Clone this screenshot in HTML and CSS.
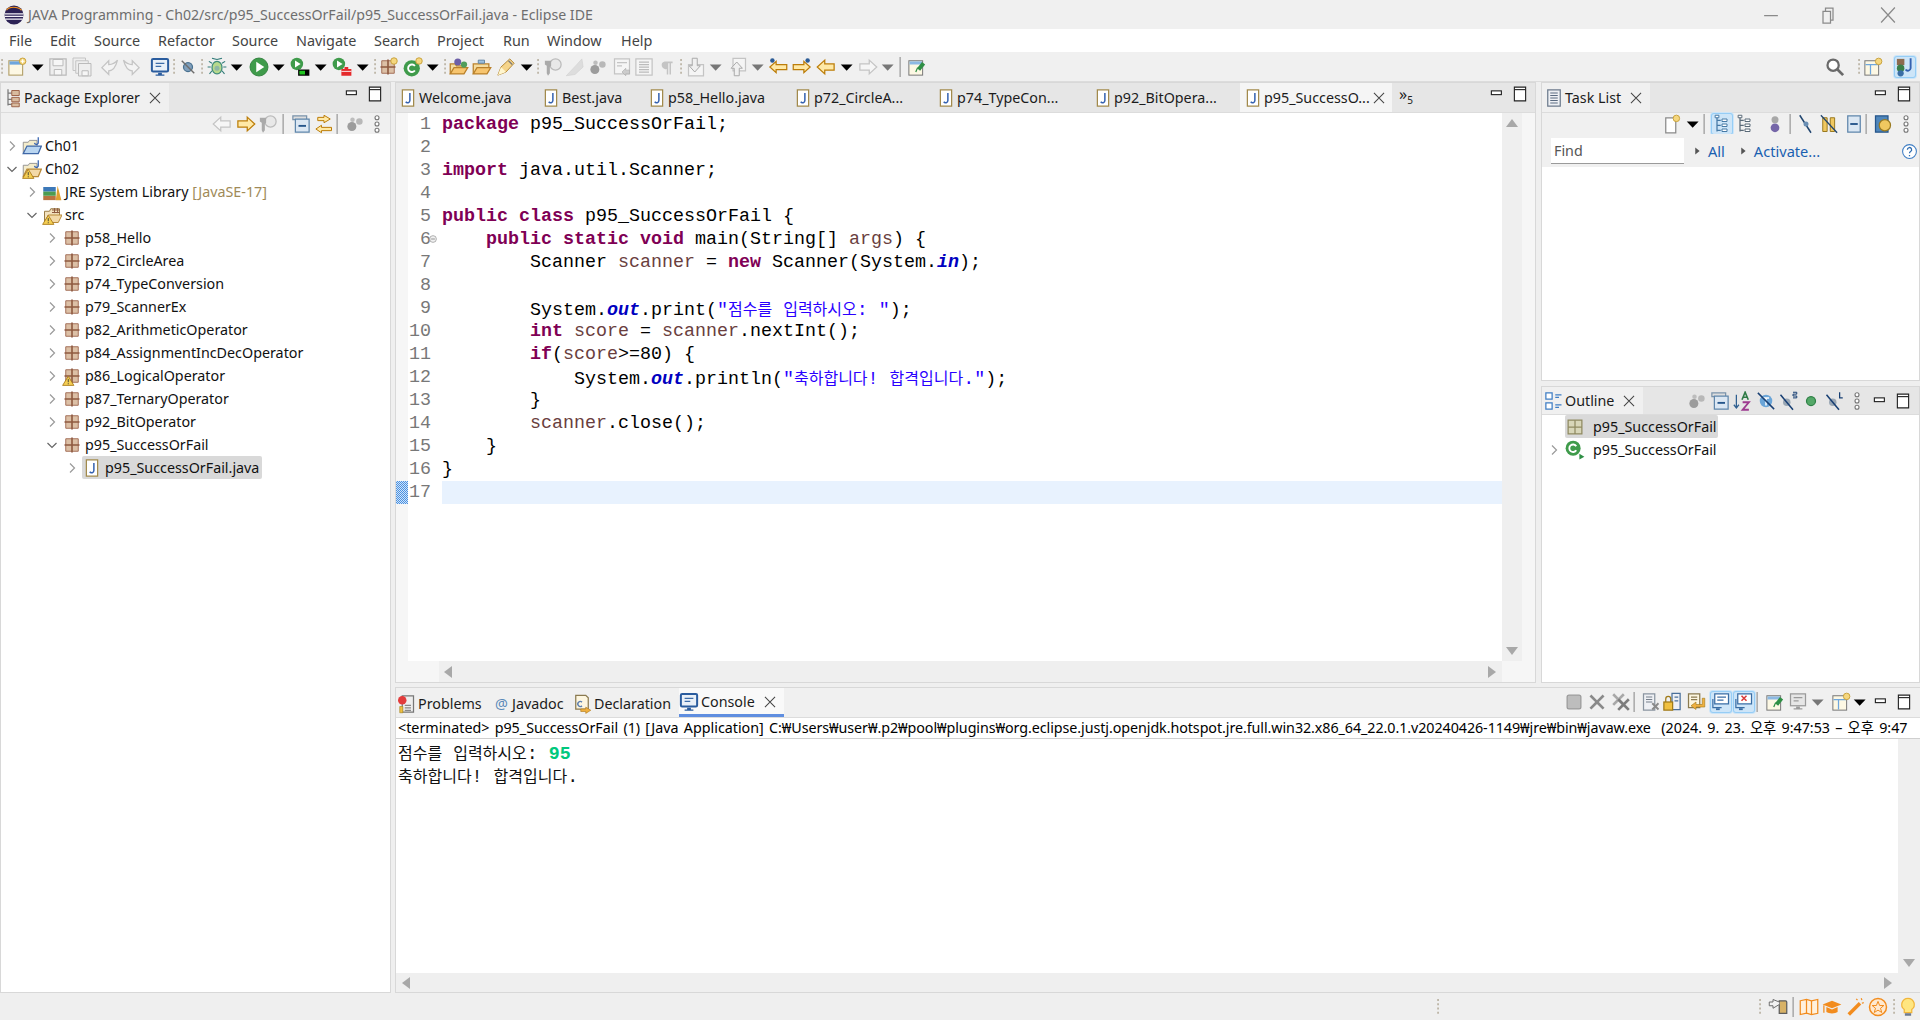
FILE: index.html
```html
<!DOCTYPE html>
<html lang="ko">
<head>
<meta charset="utf-8">
<title>JAVA Programming - Eclipse IDE</title>
<link rel="stylesheet" href="styles.css">
</head>
<body>
<svg class="sprite" xmlns="http://www.w3.org/2000/svg">
<defs>
<symbol id="eclipse" viewBox="0 0 16 16"><circle cx="8" cy="8" r="7.6" fill="#2c2255"/><path d="M.6 6.5h14.8v1H.6zM.4 8.6h15.2v1H.4zM1 10.7h14v1H1z" fill="#f4f2f8"/><path d="M2 4.2C4 1 11 1 14 4.2" fill="none" stroke="#f7941e" stroke-width=".9"/></symbol>
<symbol id="dots" viewBox="0 0 16 16"><path d="M7.4 1.5h1.3v1.6H7.4zM7.4 4.9h1.3v1.6H7.4zM7.4 8.3h1.3v1.6H7.4zM7.4 11.7h1.3v1.6H7.4z" fill="#b8b0a0"/></symbol>
<symbol id="sep" viewBox="0 0 16 16"><path d="M7.6-2h1v20h-1z" fill="#9a9a9a"/></symbol>
<symbol id="vdots" viewBox="0 0 16 16"><g fill="#fff" stroke="#777" stroke-width=".9"><circle cx="8" cy="3" r="1.6"/><circle cx="8" cy="8" r="1.6"/><circle cx="8" cy="13" r="1.6"/></g></symbol>
<symbol id="min" viewBox="0 0 16 16"><rect x="3.5" y="5.5" width="8" height="3" fill="#fff" stroke="#222" stroke-width=".9"/></symbol>
<symbol id="max" viewBox="0 0 16 16"><path d="M3.5 2.5h9v11h-9z" fill="#fff" stroke="#222" stroke-width=".9"/><path d="M3.5 4.5h9" stroke="#222" stroke-width=".9"/></symbol>
<symbol id="drop" viewBox="0 0 16 16"><path d="M3 6h9.5L7.7 11z" fill="#000"/></symbol>
<symbol id="dropg" viewBox="0 0 16 16"><path d="M3 6h9.5L7.7 11z" fill="#777"/></symbol>
<symbol id="new" viewBox="0 0 16 16"><rect x="1.5" y="3" width="11" height="11.5" fill="#fdf8e4" stroke="#b3a06a" stroke-width=".9"/><rect x="2" y="3.5" width="10" height="2.6" fill="#6ea6dd"/><circle cx="12.5" cy="3.4" r="2.6" fill="#f5d77e" stroke="#c49b34" stroke-width=".7"/><path d="M12.5 1.8v3.2M11 3.4h3" stroke="#fff" stroke-width=".9"/></symbol>
<symbol id="save" viewBox="0 0 16 16"><path d="M1.5 1.5h13v13h-13z" fill="#eee" stroke="#bbb"/><path d="M4 2h8v5H4zM5 10h6v4.400H5z" fill="#f6f6f6" stroke="#bbb" stroke-width=".8"/></symbol>
<symbol id="saveall" viewBox="0 0 16 16"><path d="M.8.8h10v10H.8z" fill="#eee" stroke="#c4c4c4" stroke-width=".8"/><path d="M3 3h10v10H3z" fill="#eee" stroke="#c4c4c4" stroke-width=".8"/><path d="M5.2 5.2h10v10h-10z" fill="#eee" stroke="#bbb" stroke-width=".8"/><path d="M8 11h5v4H8z" fill="#f6f6f6" stroke="#bbb" stroke-width=".8"/></symbol>
<symbol id="back" viewBox="0 0 16 16"><path d="M7 3 1.5 8.5 7 14v-3c3.500 0 5.500-2.500 7-8.500-2 2.500-4 3.500-7 3.500z" fill="#f4f4f4" stroke="#c4c4c4"/></symbol>
<symbol id="fwd" viewBox="0 0 16 16"><path d="M9 3l5.500 5.500L9 14v-3C5.500 11 3.500 8.500 2 2.500c2 2.500 4 3.500 7 3.500z" fill="#f4f4f4" stroke="#c4c4c4"/></symbol>
<symbol id="mon" viewBox="0 0 16 16"><rect x="1.500" y="1.500" width="13" height="10" rx="1" fill="#e9f0f8" stroke="#2a5c9e" stroke-width="1.600"/><path d="M4.500 5h7M4.500 7.500h4.500" stroke="#3d6ca8"/><path d="M6.500 12.500h3v1.500h2v1h-7v-1h2z" fill="#2a5c9e"/></symbol>
<symbol id="skip" viewBox="0 0 16 16"><circle cx="8" cy="8" r="3.600" fill="#7f9fbc" stroke="#48708f"/><path d="M3 3l10 10" stroke="#6d6d6d" stroke-width="1.100"/></symbol>
<symbol id="bug" viewBox="0 0 16 16"><g stroke="#2f7a78" stroke-width=".9"><path d="M8 2 4 1M8 2l4-1M3 8H.5M15.500 8H13M4 5 1.500 3.500M12 5l2.500-1.500M4 11l-2 2.500M12 11l2 2.500"/></g><ellipse cx="8" cy="8.500" rx="4" ry="5" fill="#b7d98c" stroke="#3f8a7a"/><circle cx="8" cy="9" r="2" fill="#8fb7a5"/></symbol>
<symbol id="run" viewBox="0 0 16 16"><circle cx="8" cy="8" r="7.200" fill="#3f9b4b" stroke="#2f7f3c" stroke-width=".7"/><path d="M5.800 3.800 12.200 8l-6.400 4.200z" fill="#fff"/></symbol>
<symbol id="cov" viewBox="0 0 16 16"><circle cx="5.500" cy="5.500" r="5" fill="#3f9b4b"/><path d="M4 2.700 8.500 5.500 4 8.300z" fill="#fff"/><rect x="6.500" y="10" width="9" height="5" fill="#000"/><rect x="7.500" y="11" width="4.500" height="3" fill="#1fc31f"/></symbol>
<symbol id="ext" viewBox="0 0 16 16"><circle cx="5.500" cy="5.500" r="5" fill="#3f9b4b"/><path d="M4 2.700 8.500 5.500 4 8.300z" fill="#fff"/><path d="M10 8h3v1.500h2.500V15H7.500V9.500H10z" fill="#e5292b"/><path d="M7.500 11.500h8" stroke="#fff" stroke-width=".7"/></symbol>
<symbol id="pkg" viewBox="0 0 16 16"><path d="M3 3h10v10H3z" fill="#dcc0a6" stroke="#a5705a" stroke-width=".8"/><path d="M8 2v12M2 8h12" stroke="#8f5a40" stroke-width="1.300"/></symbol>
<symbol id="pkgo" viewBox="0 0 16 16"><path d="M2.500 2.500h11v11h-11z" fill="#d8d6b8" stroke="#8f8a60"/><path d="M2.500 8h11M8 2.500v11" stroke="#8f8a60"/></symbol>
<symbol id="warn" viewBox="0 0 16 16"><path d="M5 8.200 9.500 15.500H.5z" fill="#f5cf54" stroke="#a97a1a" stroke-width=".7"/><path d="M5 10.500v2.500M5 13.800v.8" stroke="#333" stroke-width=".7"/></symbol>
<symbol id="newpkg" viewBox="0 0 16 16"><use href="#pkg"/><circle cx="12.800" cy="3.200" r="2.600" fill="#f5d77e" stroke="#c49b34" stroke-width=".7"/></symbol>
<symbol id="newcls" viewBox="0 0 16 16"><circle cx="7" cy="9" r="6.500" fill="#3f9b4b"/><path d="M9.500 7.200a3 3 0 1 0 0 3.600" fill="none" stroke="#fff" stroke-width="1.500"/><circle cx="12.800" cy="3.200" r="2.600" fill="#f5d77e" stroke="#c49b34" stroke-width=".7"/></symbol>
<symbol id="cls" viewBox="0 0 16 16"><circle cx="6.500" cy="6.500" r="6" fill="#3f9b4b"/><path d="M9 5a3 3 0 1 0 0 3.200" fill="none" stroke="#fff" stroke-width="1.500"/><path d="M11.500 11l4 2.300-4 2.300z" fill="#2f8f45"/></symbol>
<symbol id="open1" viewBox="0 0 16 16"><path d="M1 13.500v-8h4l1 1.500h6.500v2" fill="#f4dca0" stroke="#b9802a"/><path d="M1 13.500l3-5h11l-3 5z" fill="#f7c56f" stroke="#b9802a"/><circle cx="7" cy="4" r="2.800" fill="#6d5fa8"/><circle cx="12" cy="6" r="2.500" fill="#4f9d5c"/></symbol>
<symbol id="open2" viewBox="0 0 16 16"><path d="M1 13.500v-8h12.500v3" fill="#f4dca0" stroke="#b9802a"/><path d="M1 13.500l3-5h11l-3 5z" fill="#f7c56f" stroke="#b9802a"/><path d="M5 5V2.500h5V5z" fill="#9cc0e0" stroke="#5a7f9f" stroke-width=".7"/></symbol>
<symbol id="pencil" viewBox="0 0 16 16"><path d="M1.500 14.500 4 8l7-6.500 3.500 3.500L8 12z" fill="#f5d48a" stroke="#b58a3a" stroke-width=".8"/><path d="M1.500 14.500 4 8l4 4z" fill="#fff6cf"/><path d="M10 3l3 3" stroke="#7a7a7a"/></symbol>
<symbol id="gsrch" viewBox="0 0 16 16"><circle cx="10" cy="6" r="4.500" fill="#e8e8e8" stroke="#bbb"/><path d="M1.500 3h5v4l-1 1v5l-1.500 2-1-2V7l-1.500-1z" fill="#aaa"/></symbol>
<symbol id="gpen" viewBox="0 0 16 16"><path d="M1 15 9 6.500 13.500 1.500 14.500 8 8 14 1 15z" fill="#ddd" stroke="#d0d0d0" stroke-width=".5"/></symbol>
<symbol id="gdots" viewBox="0 0 16 16"><circle cx="5.500" cy="10" r="3.600" fill="#9c9c9c"/><circle cx="6" cy="4.500" r="1.800" fill="#bdbdbd"/><circle cx="11.500" cy="6" r="2.600" fill="#b8b8b8"/></symbol>
<symbol id="gdoc" viewBox="0 0 16 16"><path d="M2 1.500h12v12H2z" fill="#f5f5f5" stroke="#c4c4c4"/><path d="M4 4.500h8M4 7h4" stroke="#c4c4c4"/><path d="M8 12l3-3v1.500h3v3h-3V15z" fill="#ccc" stroke="#aaa" stroke-width=".5"/></symbol>
<symbol id="glines" viewBox="0 0 16 16"><path d="M1.500 1.500h13v13h-13z" fill="#f5f5f5" stroke="#c4c4c4"/><path d="M4 4h8M4 6h8M4 8h8M4 10h8M4 12h8" stroke="#bbb"/></symbol>
<symbol id="para" viewBox="0 0 16 16"><path d="M6 3.500h6.500v1.500h-1.300v9H10V5H9v9H7.800V9.500A3 3 0 0 1 6 3.500z" fill="#c4c4c4"/></symbol>
<symbol id="gdn" viewBox="0 0 16 16"><path d="M2 6h12v9H2z" fill="#f5f5f5" stroke="#c4c4c4"/><path d="M5 1h4v6h2.500L7 12 2.500 7H5z" fill="#f0f0f0" stroke="#aaa" stroke-width=".8"/></symbol>
<symbol id="gup" viewBox="0 0 16 16"><path d="M4 1h10v10H4z" fill="#f5f5f5" stroke="#c4c4c4"/><path d="M5 15V9H2.500L7 4l4.500 5H9v6z" fill="#f0f0f0" stroke="#aaa" stroke-width=".8"/></symbol>
<symbol id="navb" viewBox="0 0 16 16"><path d="M6.500 3.500 1.500 8l5 4.500V10H15V6H6.500z" fill="#ffe9a6" stroke="#bc7d09"/><circle cx="3.500" cy="2.800" r="1.800" fill="#2c5c96"/></symbol>
<symbol id="navf" viewBox="0 0 16 16"><path d="M9.500 3.500 14.500 8l-5 4.500V10H1V6h8.500z" fill="#ffe9a6" stroke="#bc7d09"/><circle cx="12.500" cy="2.800" r="1.800" fill="#2c5c96"/></symbol>
<symbol id="larr" viewBox="0 0 16 16"><path d="M7 2.500 1 8l6 5.500V10.500h7.500v-5H7z" fill="#ffe9a6" stroke="#bc7d09"/></symbol>
<symbol id="rarr" viewBox="0 0 16 16"><path d="M9 2.500 15 8l-6 5.500V10.500H1.500v-5H9z" fill="#ffe9a6" stroke="#bc7d09"/></symbol>
<symbol id="larrg" viewBox="0 0 16 16"><path d="M7 2.500 1 8l6 5.500V10.500h7.500v-5H7z" fill="#f6f6f6" stroke="#c4c4c4"/></symbol>
<symbol id="rarrg" viewBox="0 0 16 16"><path d="M9 2.500 15 8l-6 5.500V10.500H1.500v-5H9z" fill="#f6f6f6" stroke="#c4c4c4"/></symbol>
<symbol id="persp" viewBox="0 0 16 16"><rect x="1.500" y="3" width="11" height="11.500" fill="#fdf8e4" stroke="#777" stroke-width=".8"/><rect x="2" y="3.500" width="10" height="2.500" fill="#8db9e3"/><path d="M8 9l4-5 2.500 2-4 5z" fill="#2f8f45"/><path d="M8.500 8.500 7 12" stroke="#2f8f45"/></symbol>
<symbol id="fileJ" viewBox="0 0 16 16"><path d="M3.500 1.500h9v13h-9z" fill="#fff" stroke="#a28a4c"/><path d="M9.500 4v6a1.800 1.800 0 0 1-3.300 1" fill="none" stroke="#3461b0" stroke-width="1.200"/></symbol>
<symbol id="proj" viewBox="0 0 16 16"><path d="M1 14V5h4l1-1.500h6V8" fill="#f4eccb" stroke="#8a8a8a" stroke-width=".7"/><path d="M1 14l3-6h11.500L13 14z" fill="#b9d5f0" stroke="#3f68a8"/><path d="M13 1v4a1.500 1.500 0 0 1-3 .5" fill="none" stroke="#3461b0" stroke-width="1"/></symbol>
<symbol id="projw" viewBox="0 0 16 16"><path d="M1 14V5h4l1-1.500h6V8" fill="#f4eccb" stroke="#8a8a8a" stroke-width=".7"/><path d="M1 14l3-6h11.500L13 14z" fill="#f3d9a8" stroke="#b98a3a"/><path d="M13 1v4a1.500 1.500 0 0 1-3 .5" fill="none" stroke="#3461b0" stroke-width="1"/><use href="#warn"/></symbol>
<symbol id="lib" viewBox="0 0 16 16"><path d="M1 11h10v3.500H1z" fill="#b97440"/><path d="M1 7.500h10V11H1z" fill="#4c9c50"/><path d="M1 4h10v3.500H1z" fill="#3c78b8"/><path d="M11 14.500 12.500 3l3 11.500z" fill="#e0a030"/></symbol>
<symbol id="srcf" viewBox="0 0 16 16"><path d="M2 14V5h4l1-2h7v6" fill="#f3e2bf" stroke="#9a7c46" stroke-width=".8"/><path d="M2 14l3-6h11l-3 6z" fill="#f3d9a8" stroke="#b98a3a" stroke-width=".8"/><path d="M8 4h6M8 6h6M10 2.500v4M12.500 2.500v4" stroke="#8f5a3f" stroke-width=".8"/><use href="#warn"/></symbol>
<symbol id="pexp" viewBox="0 0 16 16"><path d="M4 1v13M4 4h3M4 9h3M4 13h3" stroke="#7a7a7a" fill="none"/><path d="M7 2h6v4H7zM7 7.500h6v3.500H7zM7 12h6v3H7z" fill="#d8bb9f" stroke="#95573d" stroke-width=".7"/></symbol>
<symbol id="task" viewBox="0 0 16 16"><path d="M3 1.500h10v13H3z" fill="#eef0f4" stroke="#6d7a8c"/><path d="M5 4h6M5 6h6M5 8h6M5 10h6M5 12h6" stroke="#5a6a80" stroke-width=".8"/></symbol>
<symbol id="outl" viewBox="0 0 16 16"><path d="M1.500 1.500h5v5h-5zM1.500 9.500h5v5h-5z" fill="#fff" stroke="#3f7ec4"/><path d="M9 3h5M9 5h3M9 11h5M9 13h3" stroke="#3f7ec4"/></symbol>
<symbol id="prob" viewBox="0 0 16 16"><path d="M5 1.500h9v13H5z" fill="#eee" stroke="#777"/><path d="M7 9h5M7 11h5M7 13h5" stroke="#888"/><circle cx="5" cy="5" r="3.400" fill="#e23b3b"/><path d="M3 15v-5h2.500v5z" fill="#f0c040" stroke="#a08020" stroke-width=".5"/></symbol>
<symbol id="decl" viewBox="0 0 16 16"><path d="M3 1h8l2 2v9H3z" fill="#fdf6e0" stroke="#8a7a50"/><path d="M8 6.500a2 2 0 1 0 0 3" fill="none" stroke="#5b7fb0" stroke-width="1.100"/><path d="M7 12h4v-1.500l4 2.500-4 2.500V14H7z" fill="#f0b040" stroke="#b07a18" stroke-width=".5"/></symbol>
<symbol id="newtask" viewBox="0 0 16 16"><path d="M3 3h8v12H3z" fill="#fff" stroke="#8a8a8a"/><circle cx="11.500" cy="3.500" r="2.600" fill="#f5d77e" stroke="#c49b34" stroke-width=".7"/></symbol>
<symbol id="tree1" viewBox="0 0 16 16"><path d="M4 2v12M4 5h3M4 9h3M4 13h3" stroke="#467aa6" fill="none"/><path d="M2.500 1h3v2h-3zM8 4h4v2H8zM8 8h4v2H8zM8 12h4v2H8z" fill="#fff" stroke="#467aa6" stroke-width=".8"/></symbol>
<symbol id="tree2" viewBox="0 0 16 16"><path d="M4 2v12M4 5h3M4 9h3M4 13h3" stroke="#5a6a78" fill="none"/><path d="M2.500 1h3v2h-3zM8 4h4v2H8zM8 8h4v2H8zM8 12h4v2H8z" fill="#fff" stroke="#5a6a78" stroke-width=".8"/></symbol>
<symbol id="purple" viewBox="0 0 16 16"><circle cx="8" cy="11" r="3.500" fill="#7566a8"/><circle cx="8" cy="4.500" r="2.800" fill="#a8a8a8"/></symbol>
<symbol id="slash" viewBox="0 0 16 16"><path d="M3 1l9 14" stroke="#20456f" stroke-width="1.200"/><circle cx="8" cy="8" r="2" fill="#6a8fb4"/></symbol>
<symbol id="bino" viewBox="0 0 16 16"><path d="M3 3h3.500v11H3zM9 3h3.500v11H9z" fill="#f0c860" stroke="#9a7a20" stroke-width=".8"/><path d="M1.500 1l13 14" stroke="#20456f"/></symbol>
<symbol id="colps" viewBox="0 0 16 16"><path d="M3 1.500h10v13H3z" fill="#dbe7f3" stroke="#5f86ab"/><path d="M5 8h6" stroke="#26558a" stroke-width="1.500"/></symbol>
<symbol id="colps2" viewBox="0 0 16 16"><path d="M1.500 1.500h11v3h-11z" fill="#ddd" stroke="#7a93ab"/><path d="M3.500 4h11v10.500h-11z" fill="#dbe7f3" stroke="#5f86ab"/><path d="M6 9.500h6" stroke="#26558a" stroke-width="1.500"/></symbol>
<symbol id="link" viewBox="0 0 16 16"><path d="M8 1 13 4 8 7V5.300H3V2.700h5z" fill="#ffe9a6" stroke="#bc7d09" stroke-width=".8"/><path d="M6 9 1.500 12 6 15v-1.700h8v-2.600H6z" fill="#ffe9a6" stroke="#bc7d09" stroke-width=".8"/></symbol>
<symbol id="sync" viewBox="0 0 16 16"><path d="M2 1.500h10v13H2z" fill="#4f86bb" stroke="#26558a"/><circle cx="9.500" cy="9" r="4.500" fill="#f0c860" stroke="#9a7a20"/></symbol>
<symbol id="sort" viewBox="0 0 16 16"><path d="M3.500 3v10M1.500 11l2 2.500 2-2.500" fill="none" stroke="#2f5f90"/><path d="M8 7l2.500-6L13 7M9 5h3" fill="none" stroke="#2f7a45" stroke-width="1.300"/><path d="M8.500 9h5l-5 6h5" fill="none" stroke="#9d3a90" stroke-width="1.500"/></symbol>
<symbol id="hideF" viewBox="0 0 16 16"><circle cx="8" cy="8" r="5" fill="#6aa5d8"/><path d="M5.500 5.500h5M8 5.500v6" stroke="#fff" stroke-width="1.200"/><path d="M1.500 1.500l13 13" stroke="#173f73" stroke-width="1.200"/></symbol>
<symbol id="hideS" viewBox="0 0 16 16"><circle cx="7" cy="9" r="3" fill="#9aa7b4"/><path d="M2 3l10 12" stroke="#173f73" stroke-width="1.200"/><path d="M12 1h3v1.500h-3v1.500h3v1.500h-3" fill="none" stroke="#173f73" stroke-width=".8"/></symbol>
<symbol id="hideL" viewBox="0 0 16 16"><circle cx="7" cy="9" r="3" fill="#9aa7b4"/><path d="M2 3l10 12" stroke="#173f73" stroke-width="1.200"/><path d="M12.500 1v4.500H15" fill="none" stroke="#173f73" stroke-width="1"/></symbol>
<symbol id="greend" viewBox="0 0 16 16"><circle cx="8" cy="8" r="3.600" fill="#54a868" stroke="#2f8046"/></symbol>
<symbol id="stop" viewBox="0 0 16 16"><rect x="2.500" y="2.500" width="11" height="11" rx="1.500" fill="#bdbdbd" stroke="#9a9a9a"/></symbol>
<symbol id="xg" viewBox="0 0 16 16"><path d="M2 3.500 3.500 2 8 6.500 12.500 2 14 3.500 9.500 8 14 12.500 12.500 14 8 9.500 3.500 14 2 12.500 6.500 8z" fill="#8a8a8a"/></symbol>
<symbol id="xxg" viewBox="0 0 16 16"><path d="M1 2.500 2.500 1 6 4.500 9.500 1 11 2.500 7.500 6 11 9.500 9.500 11 6 7.500 2.500 11 1 9.500 4.500 6z" fill="#a8a8a8"/><path d="M5 6.500 6.500 5 10 8.500 13.500 5 15 6.500 11.500 10 15 13.500 13.500 15 10 11.500 6.500 15 5 13.500 8.500 10z" fill="#7d7d7d"/></symbol>
<symbol id="clr" viewBox="0 0 16 16"><path d="M2 1.500h9v13H2z" fill="#eef0f4" stroke="#8a94a0"/><path d="M4 4h5M4 6h5M4 8h5" stroke="#77808c" stroke-width=".8"/><path d="M9 9l5 5M14 9l-5 5" stroke="#8a8a8a" stroke-width="1.500"/></symbol>
<symbol id="lock" viewBox="0 0 16 16"><path d="M8 1h6.500v13H8z" fill="#eef0f4" stroke="#4a6f9a"/><path d="M10 4h3M10 7h3" stroke="#4a6f9a"/><rect x="1.500" y="8" width="7" height="6.500" fill="#f0c040" stroke="#a07a18"/><path d="M3 8V5.500a2 2 0 0 1 4 0V8" fill="none" stroke="#a07a18"/></symbol>
<symbol id="wrap" viewBox="0 0 16 16"><path d="M2 1.500h9v11H2z" fill="#fdf6e0" stroke="#8a7a50"/><path d="M4 4h5M4 6h5" stroke="#8a7a50"/><path d="M13 5v5H8V8l-4 3 4 3v-2h7V5z" fill="#f0b040" stroke="#a07a18" stroke-width=".5"/></symbol>
<symbol id="conA" viewBox="0 0 16 16"><path d="M3 1.500h11v8H3z" fill="#fff" stroke="#3a6ea5"/><path d="M5 4h7M5 6.500h5" stroke="#3a6ea5"/><path d="M1.500 5.500v7h7" fill="none" stroke="#3a6ea5"/><path d="M4 13h3v1.500H4z" fill="#3a6ea5"/></symbol>
<symbol id="conB" viewBox="0 0 16 16"><path d="M3 1.500h11v8H3z" fill="#fff" stroke="#3a6ea5"/><path d="M6 3l4 4M10 3 6 7" stroke="#d83a3a" stroke-width="1.200"/><path d="M1.500 5.500v7h7" fill="none" stroke="#3a6ea5"/><path d="M4 13h3v1.500H4z" fill="#3a6ea5"/></symbol>
<symbol id="gmon" viewBox="0 0 16 16"><rect x="2" y="1.500" width="12" height="9.500" fill="#e6e6e6" stroke="#9a9a9a"/><path d="M4.500 4.500h7M4.500 7h4" stroke="#9a9a9a"/><path d="M6.500 11.500h3V13h2v1h-7v-1h2z" fill="#9a9a9a"/></symbol>
<symbol id="srch" viewBox="0 0 16 16"><circle cx="6.500" cy="6.500" r="4.500" fill="#fff" stroke="#6a6a6a" stroke-width="1.800"/><path d="M10 10l4.500 4.500" stroke="#6a6a6a" stroke-width="2.200"/></symbol>
<symbol id="pnew" viewBox="0 0 16 16"><rect x="1.500" y="3" width="11" height="11.500" fill="#fdf8e4" stroke="#777" stroke-width=".8"/><path d="M2 6h10M6 6v8" stroke="#6ea6dd"/><circle cx="12.500" cy="3.500" r="2.600" fill="#f5d77e" stroke="#c49b34" stroke-width=".7"/></symbol>
<symbol id="pjava" viewBox="0 0 16 16"><path d="M1.500 1.500h6v5h-6z" fill="#8c6a4f"/><circle cx="4.500" cy="9" r="3" fill="#3a7f48"/><circle cx="4.500" cy="13" r="2.500" fill="#3a6ea5"/><path d="M12.500 1v8a2.200 2.200 0 0 1-4 1" fill="none" stroke="#3461b0" stroke-width="1.500"/></symbol>
<symbol id="restore" viewBox="0 0 16 16"><path d="M4 5h6v9.500H4z" fill="none" stroke="#8a8a8a"/><path d="M6 5V2.500h6v9.500h-2" fill="none" stroke="#8a8a8a"/></symbol>
<symbol id="lockback" viewBox="0 0 16 16"><path d="M9 3h5a1 1 0 0 1 1 1v9H9z" fill="#d8b266" stroke="#5d5d5d"/><path d="M9 4 4 2v2H1v3h3v2l5-3" fill="#f2f2f2" stroke="#6d6d6d" stroke-width=".8"/></symbol>
<symbol id="map" viewBox="0 0 16 16"><path d="M1 3l5-1 4 1 5-1v11l-5 1-4-1-5 1z" fill="#fff1dd" stroke="#f28c1e"/><path d="M6 2v11M10 3v11" stroke="#f28c1e"/></symbol>
<symbol id="cap" viewBox="0 0 16 16"><path d="M.5 6 8 3l7.500 3L8 9z" fill="#f28c1e"/><path d="M3.500 8v4c2 1.500 7 1.500 9 0V8L8 10z" fill="#f28c1e"/><path d="M1.500 6.500v6" stroke="#f28c1e"/></symbol>
<symbol id="wand" viewBox="0 0 16 16"><path d="M2 13 11 4l2 2-9 9z" fill="#f28c1e"/><path d="M13 1l.5 1.500M9 1.500l1 1M15 4.500l-1.500.5" stroke="#f28c1e"/></symbol>
<symbol id="star" viewBox="0 0 16 16"><circle cx="8" cy="8" r="6.800" fill="#ffe9cf" stroke="#f28c1e" stroke-width="1.200"/><path d="M8 3.500 9.300 6.800H12.700L10 9l1 3.400L8 10.500 5 12.400 6 9 3.300 6.800H6.700z" fill="none" stroke="#f28c1e" stroke-width=".8"/></symbol>
<symbol id="bulb" viewBox="0 0 16 16"><path d="M8 1a5 5 0 0 0-3 9v2.500h6V10A5 5 0 0 0 8 1z" fill="#ffe680" stroke="#f1b53a"/><path d="M5.500 13h5v2h-5z" fill="#6d7a90"/></symbol>
<symbol id="chevR" viewBox="0 0 16 16"><path d="M6 3.500 10.500 8 6 12.500" fill="none" stroke="#9a9a9a" stroke-width="1.200"/></symbol>
<symbol id="chevD" viewBox="0 0 16 16"><path d="M3.500 6 8 10.500 12.500 6" fill="none" stroke="#666" stroke-width="1.200"/></symbol>
<symbol id="close" viewBox="0 0 16 16"><path d="M3.500 3.500l9 9M12.500 3.500l-9 9" stroke="#444" stroke-width=".9"/></symbol>
<symbol id="mini" viewBox="0 0 16 16"><path d="M2.500 8.500h11" stroke="#8a8a8a"/></symbol>
<symbol id="closew" viewBox="0 0 16 16"><path d="M2.500 2l11 12M13.500 2l-11 12" stroke="#8a8a8a"/></symbol>
<symbol id="su" viewBox="0 0 16 16"><path d="M8 4l6 8H2z" fill="#a8a8a8"/></symbol>
<symbol id="sd" viewBox="0 0 16 16"><path d="M8 12 2 4h12z" fill="#a8a8a8"/></symbol>
<symbol id="sl" viewBox="0 0 16 16"><path d="M4 8l8-6v12z" fill="#a8a8a8"/></symbol>
<symbol id="sr" viewBox="0 0 16 16"><path d="M12 8 4 14V2z" fill="#a8a8a8"/></symbol>
<symbol id="tri" viewBox="0 0 16 16"><path d="M6 4l5 4-5 4z" fill="#555"/></symbol>
<symbol id="help" viewBox="0 0 16 16"><circle cx="8" cy="8" r="6.500" fill="#fff" stroke="#3f7ec4"/><path d="M6 6.300a2 2 0 1 1 3 1.700c-.7.500-1 .9-1 1.700M8 11.200v1.200" fill="none" stroke="#2f6cb0" stroke-width="1.200"/></symbol>
<symbol id="fold" viewBox="0 0 16 16"><circle cx="8" cy="8" r="4.500" fill="#f0f0f0" stroke="#9a9a9a"/><path d="M5.500 8h5" stroke="#777"/></symbol>
</defs>
</svg>

<header class="titlebar">
  <svg class="logo"><use href="#eclipse"/></svg>
  <span class="title-text">JAVA Programming - Ch02/src/p95_SuccessOrFail/p95_SuccessOrFail.java - Eclipse IDE</span>
  <div class="trk end">
    <span class="g57"><svg class="ic"><use href="#mini"/></svg></span>
    <span class="g60"><svg class="ic"><use href="#restore"/></svg></span>
    <span class="g32"><svg class="ic"><use href="#closew"/></svg></span>
  </div>
</header>

<nav class="menubar trk">
  <span class="g41">File</span><span class="g44">Edit</span><span class="g64">Source</span><span class="g74">Refactor</span><span class="g64">Source</span><span class="g78">Navigate</span><span class="g63">Search</span><span class="g66">Project</span><span class="g44">Run</span><span class="g74">Window</span><span class="g44">Help</span>
</nav>

<div class="toolbar">
  <div class="trk">
    <span class="g15"><svg class="ic"><use href="#dots"/></svg></span>
    <span class="g21"><svg class="ic"><use href="#new"/></svg></span>
    <span class="g20"><svg class="ic"><use href="#drop"/></svg></span>
    <span class="g24"><svg class="ic"><use href="#save"/></svg></span>
    <span class="g28"><svg class="ic"><use href="#saveall"/></svg></span>
    <span class="g21"><svg class="ic"><use href="#back"/></svg></span>
    <span class="g29"><svg class="ic"><use href="#fwd"/></svg></span>
    <span class="g14"><svg class="ic"><use href="#mon"/></svg></span>
    <span class="g14"><svg class="ic"><use href="#dots"/></svg></span>
    <span class="g14"><svg class="ic"><use href="#skip"/></svg></span>
    <span class="g15"><svg class="ic"><use href="#dots"/></svg></span>
    <span class="g20"><svg class="ic"><use href="#bug"/></svg></span>
    <span class="g22"><svg class="ic"><use href="#drop"/></svg></span>
    <span class="g20"><svg class="ic"><use href="#run"/></svg></span>
    <span class="g21"><svg class="ic"><use href="#drop"/></svg></span>
    <span class="g21"><svg class="ic"><use href="#cov"/></svg></span>
    <span class="g21"><svg class="ic"><use href="#drop"/></svg></span>
    <span class="g21"><svg class="ic"><use href="#ext"/></svg></span>
    <span class="g12"><svg class="ic"><use href="#drop"/></svg></span>
    <span class="g13"><svg class="ic"><use href="#dots"/></svg></span>
    <span class="g25"><svg class="ic"><use href="#newpkg"/></svg></span>
    <span class="g20"><svg class="ic"><use href="#newcls"/></svg></span>
    <span class="g12"><svg class="ic"><use href="#drop"/></svg></span>
    <span class="g14"><svg class="ic"><use href="#dots"/></svg></span>
    <span class="g23"><svg class="ic"><use href="#open1"/></svg></span>
    <span class="g24"><svg class="ic"><use href="#open2"/></svg></span>
    <span class="g21"><svg class="ic"><use href="#pencil"/></svg></span>
    <span class="g11"><svg class="ic"><use href="#drop"/></svg></span>
    <span class="g15"><svg class="ic"><use href="#dots"/></svg></span>
    <span class="g22"><svg class="ic"><use href="#gsrch"/></svg></span>
    <span class="g23"><svg class="ic"><use href="#gpen"/></svg></span>
    <span class="g24"><svg class="ic"><use href="#gdots"/></svg></span>
    <span class="g22"><svg class="ic"><use href="#gdoc"/></svg></span>
    <span class="g23"><svg class="ic"><use href="#glines"/></svg></span>
    <span class="g14"><svg class="ic"><use href="#para"/></svg></span>
    <span class="g15"><svg class="ic"><use href="#dots"/></svg></span>
    <span class="g20"><svg class="ic"><use href="#gdn"/></svg></span>
    <span class="g22"><svg class="ic"><use href="#dropg"/></svg></span>
    <span class="g20"><svg class="ic"><use href="#gup"/></svg></span>
    <span class="g20"><svg class="ic"><use href="#dropg"/></svg></span>
    <span class="g24"><svg class="ic"><use href="#navb"/></svg></span>
    <span class="g24"><svg class="ic"><use href="#navf"/></svg></span>
    <span class="g21"><svg class="ic"><use href="#larr"/></svg></span>
    <span class="g21"><svg class="ic"><use href="#drop"/></svg></span>
    <span class="g20"><svg class="ic"><use href="#rarrg"/></svg></span>
    <span class="g12"><svg class="ic"><use href="#dropg"/></svg></span>
    <span class="g17"><svg class="ic"><use href="#sep"/></svg></span>
    <span class="g17"><svg class="ic"><use href="#persp"/></svg></span>
  </div>
  <div class="trk end">
    <span class="g24"><svg class="ic"><use href="#srch"/></svg></span>
    <span class="g14"><svg class="ic"><use href="#dots"/></svg></span>
    <span class="g32"><svg class="ic"><use href="#pnew"/></svg></span>
    <span class="g15"><svg class="ic on"><use href="#pjava"/></svg></span>
  </div>
</div>

<main class="workbench">
  <section class="panel left">
    <div class="panel-head">
      <div class="vtab cur w-pe"><svg class="ic-s"><use href="#pexp"/></svg><span>Package Explorer</span><svg class="ic-x"><use href="#close"/></svg></div>
      <div class="mm"><svg class="ic-m"><use href="#min"/></svg><svg class="ic-m"><use href="#max"/></svg></div>
    </div>
    <div class="view-bar trk-row">
      <div class="trk end">
        <span class="g24"><svg class="ic"><use href="#larrg"/></svg></span>
        <span class="g22"><svg class="ic"><use href="#rarr"/></svg></span>
        <span class="g15"><svg class="ic"><use href="#gsrch"/></svg></span>
        <span class="g18"><svg class="ic"><use href="#sep"/></svg></span>
        <span class="g23"><svg class="ic"><use href="#colps2"/></svg></span>
        <span class="g13"><svg class="ic"><use href="#link"/></svg></span>
        <span class="g18"><svg class="ic"><use href="#sep"/></svg></span>
        <span class="g22"><svg class="ic"><use href="#gdots"/></svg></span>
        <span class="g13"><svg class="ic"><use href="#vdots"/></svg></span>
      </div>
    </div>
    <div class="tree">
      <div class="row"><span class="chev"><svg class="ic-c"><use href="#chevR"/></svg></span><svg class="ic-s"><use href="#proj"/></svg><span class="lbl">Ch01</span></div>
      <div class="row"><span class="chev"><svg class="ic-c"><use href="#chevD"/></svg></span><svg class="ic-s"><use href="#projw"/></svg><span class="lbl">Ch02</span></div>
      <div class="row l1"><span class="chev"><svg class="ic-c"><use href="#chevR"/></svg></span><svg class="ic-s"><use href="#lib"/></svg><span class="lbl">JRE System Library <span class="deco">[JavaSE-17]</span></span></div>
      <div class="row l1"><span class="chev"><svg class="ic-c"><use href="#chevD"/></svg></span><svg class="ic-s"><use href="#srcf"/></svg><span class="lbl">src</span></div>
      <div class="row l2"><span class="chev"><svg class="ic-c"><use href="#chevR"/></svg></span><svg class="ic-s"><use href="#pkg"/></svg><span class="lbl">p58_Hello</span></div>
      <div class="row l2"><span class="chev"><svg class="ic-c"><use href="#chevR"/></svg></span><svg class="ic-s"><use href="#pkg"/></svg><span class="lbl">p72_CircleArea</span></div>
      <div class="row l2"><span class="chev"><svg class="ic-c"><use href="#chevR"/></svg></span><svg class="ic-s"><use href="#pkg"/></svg><span class="lbl">p74_TypeConversion</span></div>
      <div class="row l2"><span class="chev"><svg class="ic-c"><use href="#chevR"/></svg></span><svg class="ic-s"><use href="#pkg"/></svg><span class="lbl">p79_ScannerEx</span></div>
      <div class="row l2"><span class="chev"><svg class="ic-c"><use href="#chevR"/></svg></span><svg class="ic-s"><use href="#pkg"/></svg><span class="lbl">p82_ArithmeticOperator</span></div>
      <div class="row l2"><span class="chev"><svg class="ic-c"><use href="#chevR"/></svg></span><svg class="ic-s"><use href="#pkg"/></svg><span class="lbl">p84_AssignmentIncDecOperator</span></div>
      <div class="row l2"><span class="chev"><svg class="ic-c"><use href="#chevR"/></svg></span><svg class="ic-s"><use href="#pkg"/><use href="#warn"/></svg><span class="lbl">p86_LogicalOperator</span></div>
      <div class="row l2"><span class="chev"><svg class="ic-c"><use href="#chevR"/></svg></span><svg class="ic-s"><use href="#pkg"/></svg><span class="lbl">p87_TernaryOperator</span></div>
      <div class="row l2"><span class="chev"><svg class="ic-c"><use href="#chevR"/></svg></span><svg class="ic-s"><use href="#pkg"/></svg><span class="lbl">p92_BitOperator</span></div>
      <div class="row l2"><span class="chev"><svg class="ic-c"><use href="#chevD"/></svg></span><svg class="ic-s"><use href="#pkg"/></svg><span class="lbl">p95_SuccessOrFail</span></div>
      <div class="row l3"><span class="chev"><svg class="ic-c"><use href="#chevR"/></svg></span><span class="sel"><svg class="ic-s"><use href="#fileJ"/></svg><span class="lbl">p95_SuccessOrFail.java</span></span></div>
    </div>
  </section>

  <div class="center">
    <div class="top">
      <section class="panel editor">
        <div class="panel-head">
          <div class="etab t143 p3"><svg class="ic-s"><use href="#fileJ"/></svg><span>Welcome.java</span></div>
          <div class="etab t107 p3"><svg class="ic-s"><use href="#fileJ"/></svg><span>Best.java</span></div>
          <div class="etab t147 p1"><svg class="ic-s"><use href="#fileJ"/></svg><span>p58_Hello.java</span></div>
          <div class="etab t143"><svg class="ic-s"><use href="#fileJ"/></svg><span>p72_CircleA...</span></div>
          <div class="etab t157"><svg class="ic-s"><use href="#fileJ"/></svg><span>p74_TypeCon...</span></div>
          <div class="etab t147"><svg class="ic-s"><use href="#fileJ"/></svg><span>p92_BitOpera...</span></div>
          <div class="etab t152 cur"><svg class="ic-s"><use href="#fileJ"/></svg><span>p95_SuccessO...</span><svg class="ic-x"><use href="#close"/></svg></div>
          <div class="more">»<sub>5</sub></div>
          <div class="mm"><svg class="ic-m"><use href="#min"/></svg><svg class="ic-m"><use href="#max"/></svg></div>
        </div>
        <div class="edit-main">
          <div class="code">
            <div class="ln"><span class="no">1</span><span class="src"><b>package</b> p95_SuccessOrFail;</span></div>
            <div class="ln"><span class="no">2</span><span class="src"></span></div>
            <div class="ln"><span class="no">3</span><span class="src"><b>import</b> java.util.Scanner;</span></div>
            <div class="ln"><span class="no">4</span><span class="src"></span></div>
            <div class="ln"><span class="no">5</span><span class="src"><b>public</b> <b>class</b> p95_SuccessOrFail {</span></div>
            <div class="ln"><span class="no">6<svg class="ic-f"><use href="#fold"/></svg></span><span class="src">    <b>public</b> <b>static</b> <b>void</b> main(String[] <i>args</i>) {</span></div>
            <div class="ln"><span class="no">7</span><span class="src">        Scanner <i>scanner</i> = <b>new</b> Scanner(System.<em>in</em>);</span></div>
            <div class="ln"><span class="no">8</span><span class="src"></span></div>
            <div class="ln"><span class="no">9</span><span class="src">        System.<em>out</em>.print(<u>"<span class="ko">점수를</span> <span class="ko">입력하시오</span>: "</u>);</span></div>
            <div class="ln"><span class="no">10</span><span class="src">        <b>int</b> <i>score</i> = <i>scanner</i>.nextInt();</span></div>
            <div class="ln"><span class="no">11</span><span class="src">        <b>if</b>(<i>score</i>&gt;=80) {</span></div>
            <div class="ln"><span class="no">12</span><span class="src">            System.<em>out</em>.println(<u>"<span class="ko">축하합니다</span>! <span class="ko">합격입니다</span>."</u>);</span></div>
            <div class="ln"><span class="no">13</span><span class="src">        }</span></div>
            <div class="ln"><span class="no">14</span><span class="src">        <i>scanner</i>.close();</span></div>
            <div class="ln"><span class="no">15</span><span class="src">    }</span></div>
            <div class="ln"><span class="no">16</span><span class="src">}</span></div>
            <div class="ln cur"><span class="no">17</span><span class="src"></span></div>
          </div>
          <div class="vscroll"><svg class="ic-a"><use href="#su"/></svg><svg class="ic-a"><use href="#sd"/></svg></div>
          <div class="vmargin"></div>
        </div>
        <div class="hscroll">
          <div class="hleft"></div>
          <div class="htrack"><svg class="ic-a"><use href="#sl"/></svg><svg class="ic-a"><use href="#sr"/></svg></div>
          <div class="hcorner"></div>
        </div>
      </section>

      <div class="side">
        <section class="panel tasks">
          <div class="panel-head">
            <div class="vtab cur w-tl"><svg class="ic-s"><use href="#task"/></svg><span>Task List</span><svg class="ic-x"><use href="#close"/></svg></div>
            <div class="mm"><svg class="ic-m"><use href="#min"/></svg><svg class="ic-m"><use href="#max"/></svg></div>
          </div>
          <div class="view-bar trk-row">
            <div class="trk end">
              <span class="g21"><svg class="ic"><use href="#newtask"/></svg></span>
              <span class="g11"><svg class="ic"><use href="#drop"/></svg></span>
              <span class="g18"><svg class="ic"><use href="#sep"/></svg></span>
              <span class="g23"><svg class="ic on"><use href="#tree1"/></svg></span>
              <span class="g30"><svg class="ic"><use href="#tree2"/></svg></span>
              <span class="g15"><svg class="ic"><use href="#purple"/></svg></span>
              <span class="g16"><svg class="ic"><use href="#sep"/></svg></span>
              <span class="g23"><svg class="ic"><use href="#slash"/></svg></span>
              <span class="g25"><svg class="ic"><use href="#bino"/></svg></span>
              <span class="g12"><svg class="ic"><use href="#colps"/></svg></span>
              <span class="g17"><svg class="ic"><use href="#sep"/></svg></span>
              <span class="g23"><svg class="ic"><use href="#sync"/></svg></span>
              <span class="g13"><svg class="ic"><use href="#vdots"/></svg></span>
            </div>
          </div>
          <div class="find-bar">
            <span class="find-box">Find</span>
            <svg class="ic-t"><use href="#tri"/></svg><a class="lnk">All</a>
            <svg class="ic-t wide"><use href="#tri"/></svg><a class="lnk">Activate...</a>
            <svg class="ic-h"><use href="#help"/></svg>
          </div>
          <div class="blank"></div>
        </section>
        <section class="panel outline">
          <div class="panel-head slim">
            <div class="vtab cur w-ol"><svg class="ic-s"><use href="#outl"/></svg><span>Outline</span><svg class="ic-x"><use href="#close"/></svg></div>
            <div class="trk end">
              <span class="g23"><svg class="ic"><use href="#gdots"/></svg></span>
              <span class="g22"><svg class="ic"><use href="#colps2"/></svg></span>
              <span class="g24"><svg class="ic"><use href="#sort"/></svg></span>
              <span class="g22"><svg class="ic"><use href="#hideF"/></svg></span>
              <span class="g23"><svg class="ic"><use href="#hideS"/></svg></span>
              <span class="g23"><svg class="ic"><use href="#greend"/></svg></span>
              <span class="g23"><svg class="ic"><use href="#hideL"/></svg></span>
              <span class="g23"><svg class="ic"><use href="#vdots"/></svg></span>
              <span class="g23"><svg class="ic"><use href="#min"/></svg></span>
              <span class="g16"><svg class="ic"><use href="#max"/></svg></span>
            </div>
          </div>
          <div class="otree">
            <div class="orow"><span class="chev"></span><span class="sel"><svg class="ic-s"><use href="#pkgo"/></svg><span class="lbl">p95_SuccessOrFail</span></span></div>
            <div class="orow"><span class="chev"><svg class="ic-c"><use href="#chevR"/></svg></span><span class="osel"><svg class="ic-s"><use href="#cls"/></svg><span class="lbl">p95_SuccessOrFail</span></span></div>
          </div>
        </section>
      </div>
    </div>

    <section class="panel console">
      <div class="panel-head light">
        <div class="ctab w-pr"><svg class="ic-s"><use href="#prob"/></svg><span>Problems</span></div>
        <div class="ctab w-jd"><span class="at">@</span><span>Javadoc</span></div>
        <div class="ctab w-de"><svg class="ic-s"><use href="#decl"/></svg><span>Declaration</span></div>
        <div class="ctab cons"><svg class="ic-s"><use href="#mon"/></svg><span>Console</span><svg class="ic-x"><use href="#close"/></svg></div>
        <div class="trk end">
          <span class="g23"><svg class="ic"><use href="#stop"/></svg></span>
          <span class="g24"><svg class="ic"><use href="#xg"/></svg></span>
          <span class="g13"><svg class="ic"><use href="#xxg"/></svg></span>
          <span class="g17"><svg class="ic"><use href="#sep"/></svg></span>
          <span class="g21"><svg class="ic"><use href="#clr"/></svg></span>
          <span class="g24"><svg class="ic"><use href="#lock"/></svg></span>
          <span class="g25"><svg class="ic"><use href="#wrap"/></svg></span>
          <span class="g23"><svg class="ic on"><use href="#conA"/></svg></span>
          <span class="g13"><svg class="ic on"><use href="#conB"/></svg></span>
          <span class="g18"><svg class="ic"><use href="#sep"/></svg></span>
          <span class="g23"><svg class="ic"><use href="#persp"/></svg></span>
          <span class="g20"><svg class="ic"><use href="#gmon"/></svg></span>
          <span class="g23"><svg class="ic"><use href="#dropg"/></svg></span>
          <span class="g19"><svg class="ic"><use href="#pnew"/></svg></span>
          <span class="g21"><svg class="ic"><use href="#drop"/></svg></span>
          <span class="g23"><svg class="ic"><use href="#min"/></svg></span>
          <span class="g16"><svg class="ic"><use href="#max"/></svg></span>
        </div>
      </div>
      <div class="desc">&lt;terminated&gt; p95_SuccessOrFail (1) [Java Application] <span class="path">C:₩Users₩user₩.p2₩pool₩plugins₩org.eclipse.justj.openjdk.hotspot.jre.full.win32.x86_64_22.0.1.v20240426-1149₩jre₩bin₩javaw.exe</span>  (2024. 9. 23. 오후 9:47:53 – 오후 9:47</div>
      <div class="con-main">
        <div class="con-text">
          <div class="cl"><span class="ko">점수를</span> <span class="ko">입력하시오</span>: <span class="stdin">95</span></div>
          <div class="cl"><span class="ko">축하합니다</span>! <span class="ko">합격입니다</span>.</div>
        </div>
        <div class="con-v"><svg class="ic-a"><use href="#sd"/></svg></div>
      </div>
      <div class="con-h"><svg class="ic-a"><use href="#sl"/></svg><svg class="ic-a"><use href="#sr"/></svg></div>
    </section>
  </div>
</main>

<footer class="statusbar">
  <div class="trk end">
    <span class="g322"><svg class="ic"><use href="#dots"/></svg></span>
    <span class="g18"><svg class="ic"><use href="#dots"/></svg></span>
    <span class="g15"><svg class="ic"><use href="#lockback"/></svg></span>
    <span class="g16"><svg class="ic"><use href="#sep"/></svg></span>
    <span class="g23"><svg class="ic"><use href="#map"/></svg></span>
    <span class="g23"><svg class="ic"><use href="#cap"/></svg></span>
    <span class="g23"><svg class="ic"><use href="#wand"/></svg></span>
    <span class="g16"><svg class="ic"><use href="#star"/></svg></span>
    <span class="g14"><svg class="ic"><use href="#dots"/></svg></span>
    <span class="g12"><svg class="ic"><use href="#bulb"/></svg></span>
  </div>
</footer>
</body>
</html>
```
FILE: styles.css
```css
* { box-sizing: border-box; }
html, body { margin: 0; height: 100%; }
body {
  width: 1920px; height: 1020px; overflow: hidden;
  display: flex; flex-direction: column;
  background: #efefef; color: #111;
  font: 14.3px/20px "Noto Sans", "Noto Sans CJK KR", sans-serif;
}
.sprite { width: 0; height: 0; position: absolute; }

/* position tracks: every cell is as wide as the distance to the next icon centre */
.trk { display: flex; align-items: center; flex: none; }
.trk.end { margin-left: auto; }
.trk > span { flex: none; display: flex; align-items: center; white-space: nowrap; }
.ic { width: 20px; height: 20px; margin-left: -10px; flex: none; overflow: visible; }
.ic.on { background: #cde5f8; box-shadow: 0 0 0 1px #96cdf5, 0 0 0 2px #cde5f8; border-radius: 2px; }
.g11{width:11px}.g12{width:12px}.g13{width:13px}.g14{width:14px}.g15{width:15px}.g16{width:16px}.g17{width:17px}.g18{width:18px}.g19{width:19px}
.g20{width:20px}.g21{width:21px}.g22{width:22px}.g23{width:23px}.g24{width:24px}.g25{width:25px}.g28{width:28px}.g29{width:29px}.g30{width:30px}
.g32{width:32px}.g41{width:41px}.g44{width:44px}.g57{width:57px}.g60{width:60px}.g63{width:63px}.g64{width:64px}.g66{width:66px}.g74{width:74px}.g78{width:78px}.g322{width:322px}

.titlebar { height: 29px; flex: none; display: flex; align-items: center; background: #f0f0f0; padding-left: 4px; }
.logo { width: 20px; height: 20px; flex: none; }
.title-text { margin-left: 4px; color: #6e6e6e; font-size: 14.15px; white-space: nowrap; }

.menubar { height: 23px; background: #fff; padding-left: 9px; color: #444; font-size: 14.4px; }

.toolbar { height: 30px; flex: none; display: flex; align-items: center; padding-left: 2px; background: #f0f0f0; border-bottom: 1px solid #dcdcdc; }

.workbench { height: 911px; flex: none; display: flex; gap: 4px; }
.panel { display: flex; flex-direction: column; border: 1px solid #d8d8d8; background: #fff; min-width: 0; }
.left { width: 391px; flex: none; }
.center { flex: 1; min-width: 0; display: flex; flex-direction: column; gap: 4px; }
.top { height: 601px; flex: none; display: flex; gap: 5px; }
.editor { width: 1141px; flex: none; }
.side { flex: 1; min-width: 0; display: flex; flex-direction: column; gap: 5px; }
.tasks { height: 299px; flex: none; }
.outline { flex: 1; min-height: 0; }
.console { flex: 1; min-height: 0; border-right: 0; }

.panel-head { height: 30px; flex: none; display: flex; align-items: stretch; background: #e6e6e6; border-bottom: 1px solid #dcdcdc; }
.panel-head.light { background: #f0f0f0; }
.panel-head.slim { height: 28px; }
.panel-head > .trk { height: 28px; }
.vtab, .etab, .ctab { display: flex; align-items: center; flex: none; white-space: nowrap; color: #1c1c1c; }
.vtab.cur { background: #f0f0f0; }
.vtab { padding-left: 2px; }
.vtab > span { margin-left: 1px; }
.w-pe { width: 168px; }
.w-tl { width: 108px; }
.w-ol { width: 101px; }
.ic-s { width: 20px; height: 20px; flex: none; overflow: visible; }
.ic-x { width: 18px; height: 18px; flex: none; margin-left: auto; margin-right: 5px; }
.ic-m { width: 20px; height: 20px; flex: none; }
.mm { margin-left: auto; display: flex; align-items: center; gap: 3px; padding-right: 5px; height: 22px; }

.etab > span { margin-left: 1px; }
.p3 { padding-left: 2px; }
.p1 { padding-left: 1px; }
.t107 { width: 107px; } .t143 { width: 143px; } .t147 { width: 147px; } .t157 { width: 157px; }
.t152 { width: 152px; padding-left: 3px; }
.etab.cur { background: #f5f5f5; }
.more { width: 30px; padding: 0 0 0 7px; font-size: 16px; line-height: 22px; color: #222; }
.more sub { font-size: 10px; line-height: 0; }

.view-bar { height: 21px; flex: none; background: #f0f0f0; }
.trk-row { display: flex; align-items: center; }

.tree { flex: 1; }
.row { height: 23px; display: flex; align-items: center; white-space: nowrap; }
.l1 { padding-left: 20px; } .l2 { padding-left: 40px; } .l3 { padding-left: 60px; }
.chev { width: 21px; flex: none; display: flex; justify-content: center; }
.ic-c { width: 16px; height: 16px; }
.lbl { margin-left: 3px; padding-right: 3px; }
.deco { color: #a08a58; }
.sel { display: flex; align-items: center; height: 23px; background: #d9d9d9; border-radius: 2px; }

.edit-main { flex: 1; min-height: 0; display: flex; }
.code { width: 1106px; flex: none; background: linear-gradient(to right, #f6f6f6 12px, #fff 12px); font: 18.33px/23px "Liberation Mono", monospace; color: #000; }
.ln { height: 23px; display: flex; white-space: pre; }
.no { width: 46px; flex: none; padding-right: 11px; text-align: right; color: #787878; position: relative; }
.ic-f { position: absolute; right: 3px; top: 5px; width: 12px; height: 12px; }
.src { flex: 1; }
.src b { color: #7f0055; }
.src i { font-style: normal; color: #6a3e3e; }
.src em { font-style: italic; font-weight: bold; color: #0000c0; }
.src u { text-decoration: none; color: #2a00ff; }
.ko { font-family: "Noto Sans CJK KR", sans-serif; font-size: 16px; }
.ln.cur .src { background: #e8f2fe; }
.ln.cur .no::before {
  content: ""; position: absolute; left: 0; top: 0; width: 12px; height: 23px;
  background: repeating-conic-gradient(#4a90e2 0 25%, #cfe4f8 0 50%) 0 0 / 2px 2px;
}

.vscroll { width: 20px; flex: none; background: #efefef; display: flex; flex-direction: column; justify-content: space-between; padding: 2px 0; align-items: center; }
.ic-a { width: 16px; height: 16px; flex: none; }
.vmargin { flex: 1; background: #f6f6f6; }
.hscroll { height: 21px; flex: none; display: flex; }
.hleft { width: 43px; flex: none; background: #f6f6f6; }
.htrack { width: 1063px; flex: none; background: #efefef; display: flex; align-items: center; justify-content: space-between; padding: 0 2px 0 1px; }
.hcorner { flex: 1; background: #f6f6f6; }

.find-bar { height: 33px; flex: none; display: flex; align-items: center; background: #f0f0f0; padding-left: 9px; padding-top: 1px; }
.find-box { width: 133px; height: 26px; background: #fff; border-bottom: 1px solid #9a9a9a; color: #555; padding: 3px 3px; line-height: 20px; }
.ic-t { width: 14px; height: 14px; flex: none; margin-left: 6px; }
.ic-t.wide { margin-left: 11px; }
.lnk { color: #1a5fb0; margin-left: 4px; font-size: 14.6px; }
.ic-h { width: 17px; height: 17px; margin-left: auto; margin-right: 1px; flex: none; }
.blank { flex: 1; }
.otree { flex: 1; }
.orow { height: 23px; display: flex; align-items: center; white-space: nowrap; padding-left: 1px; }
.orow .sel, .osel { display: flex; align-items: center; height: 23px; }
.orow .sel { background: #d9d9d9; width: 153px; }
.orow .chev { width: 22px; }
.orow .lbl { margin-left: 8px; }

.panel-head.light .ctab { padding-top: 2px; }
.ctab > span { margin-left: 2px; }
.w-pr { width: 96px; }
.w-jd { width: 80px; }
.w-de { width: 107px; }
.at { color: #5b8ab8; width: 17px; margin-left: 1px !important; text-align: center; }
.cons { width: 105px; background: #f9f9f9; border-bottom: 3px solid #5f8ee0; }
.desc { height: 21px; flex: none; overflow: hidden; white-space: pre; padding-left: 2px; font-size: 14.3px; line-height: 20px; color: #000; border-bottom: 1px solid #cfcfcf; word-spacing: 1.5px; }
.path { letter-spacing: -.07px; }
.con-main { flex: 1; min-height: 0; display: flex; }
.con-text { flex: 1; font: 18.33px/23px "Liberation Mono", monospace; padding: 2px 0 0 2px; }
.cl { white-space: pre; height: 23px; }
.stdin { color: #00c87d; font-weight: bold; }
.con-v { width: 22px; flex: none; background: #efefef; display: flex; flex-direction: column; justify-content: flex-end; align-items: center; padding-bottom: 2px; }
.con-h { height: 19px; flex: none; background: #efefef; display: flex; align-items: center; justify-content: space-between; padding: 0 24px 0 2px; }
.statusbar { flex: 1; display: flex; align-items: center; background: #efefef; }
```
